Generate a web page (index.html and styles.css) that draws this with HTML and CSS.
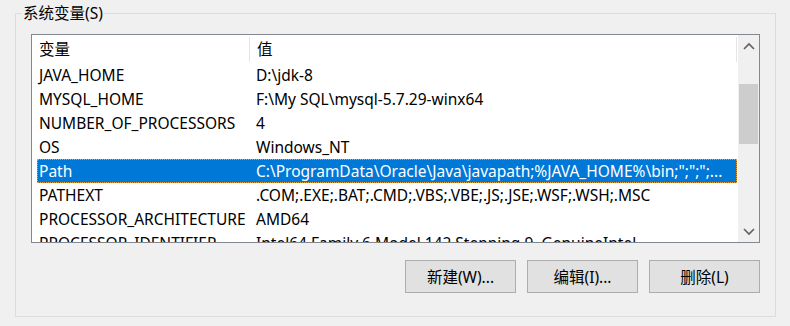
FILE: index.html
```html
<!DOCTYPE html>
<html lang="zh-CN">
<head>
    <meta charset="UTF-8">
    <title>系统变量</title>
    <link rel="stylesheet" href="styles.css">
</head>
<body>
    <fieldset class="group">
        <legend class="group-title">系统变量(S)</legend>
        <div class="list">
            <div class="list-body">
                <div class="list-head">
                    <div class="col-name">变量</div>
                    <div class="col-value">值</div>
                </div>
                <div class="row"><div class="col-name">JAVA_HOME</div><div class="col-value">D:\jdk-8</div></div>
                <div class="row"><div class="col-name">MYSQL_HOME</div><div class="col-value">F:\My SQL\mysql-5.7.29-winx64</div></div>
                <div class="row"><div class="col-name">NUMBER_OF_PROCESSORS</div><div class="col-value">4</div></div>
                <div class="row"><div class="col-name">OS</div><div class="col-value">Windows_NT</div></div>
                <div class="row selected"><div class="col-name">Path</div><div class="col-value">C:\ProgramData\Oracle\Java\javapath;%JAVA_HOME%\bin;";";";...</div></div>
                <div class="row"><div class="col-name">PATHEXT</div><div class="col-value">.COM;.EXE;.BAT;.CMD;.VBS;.VBE;.JS;.JSE;.WSF;.WSH;.MSC</div></div>
                <div class="row"><div class="col-name">PROCESSOR_ARCHITECTURE</div><div class="col-value">AMD64</div></div>
                <div class="row"><div class="col-name">PROCESSOR_IDENTIFIER</div><div class="col-value">Intel64 Family 6 Model 142 Stepping 9, GenuineIntel</div></div>
            </div>
            <div class="scrollbar">
                <div class="arrow">
                    <svg width="12" height="8" viewBox="0 0 12 8"><path d="M1 7 L6 2 L11 7" fill="none" stroke="#606060" stroke-width="1.6"/></svg>
                </div>
                <div class="track">
                    <div class="thumb"></div>
                </div>
                <div class="arrow">
                    <svg width="12" height="8" viewBox="0 0 12 8"><path d="M1 1 L6 6 L11 1" fill="none" stroke="#606060" stroke-width="1.6"/></svg>
                </div>
            </div>
        </div>
        <div class="buttons">
            <button class="button">新建(W)...</button>
            <button class="button">编辑(I)...</button>
            <button class="button">删除(L)</button>
        </div>
    </fieldset>
</body>
</html>
```

FILE: styles.css
```css
body {
    font-family: 'Noto Sans', 'Noto Sans CJK SC', sans-serif;
    font-size: 15.5px;
    background-color: #f0f0f0;
    color: #000;
    margin: 0;
    padding: 3px 0 0 15px;
}
.group {
    width: 729px;
    height: 312px;
    margin: 0;
    padding: 0 15px 0 15px;
    border: 1px solid #dcdcdc;
}
.group-title {
    padding: 0 1px;
    margin-left: -9px;
    line-height: 20px;
}
.list {
    display: flex;
    height: 207px;
    margin-top: 11px;
    background: #fff;
    border: 1px solid #828790;
    overflow: hidden;
}
.list-body {
    flex: 1;
    overflow: hidden;
}
.list-head {
    display: flex;
    height: 28px;
    line-height: 28px;
}
.list-head .col-name {
    border-right: 1px solid #e5e5e5;
    margin-top: 2px;
    line-height: 24px;
    height: 25px;
}
.list-head .col-value {
    width: 479px;
    border-right: 1px solid #e5e5e5;
    margin-top: 2px;
    line-height: 24px;
    height: 25px;
    flex: none;
}
.col-name {
    width: 210px;
    padding-left: 7px;
    flex: none;
    white-space: nowrap;
    overflow: hidden;
}
.col-value {
    padding-left: 7px;
    white-space: nowrap;
    overflow: hidden;
    text-overflow: ellipsis;
    flex: 1;
}
.row {
    display: flex;
    height: 24px;
    line-height: 24px;
    margin-left: 5px;
    margin-right: 1px;
}
.row .col-name {
    width: 210px;
    padding-left: 2px;
}
.row .col-value {
    padding-left: 7px;
}
.selected {
    background: #0078d7;
    color: #fff;
    box-sizing: border-box;
    border: 1px dotted #e8a040;
    line-height: 22px;
}
.selected .col-name {
    padding-left: 1px;
}
.scrollbar {
    width: 21px;
    flex: none;
    display: flex;
    flex-direction: column;
    background: #f0f0f0;
}
.arrow {
    height: 21px;
    display: flex;
    align-items: center;
    justify-content: center;
}
.track {
    flex: 1;
    padding-top: 28px;
}
.thumb {
    height: 60px;
    background: #cdcdcd;
    margin: 0 1px;
}
.buttons {
    display: flex;
    justify-content: flex-end;
    gap: 11px;
    margin-top: 17px;
}
.button {
    width: 111px;
    height: 33px;
    background: #e1e1e1;
    border: 1px solid #adadad;
    font-family: 'Noto Sans', 'Noto Sans CJK SC', sans-serif;
    font-size: 15.5px;
    color: #000;
    padding: 0;
}
```
